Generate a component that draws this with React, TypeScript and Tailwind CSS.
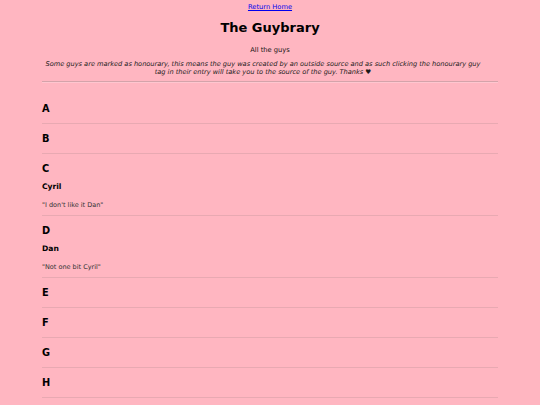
const sections: { letter: string; guys: { name: string; quote: string }[] }[] = [
  { letter: 'A', guys: [] },
  { letter: 'B', guys: [] },
  { letter: 'C', guys: [{ name: 'Cyril', quote: '"I don\'t like it Dan"' }] },
  { letter: 'D', guys: [{ name: 'Dan', quote: '"Not one bit Cyril"' }] },
  { letter: 'E', guys: [] },
  { letter: 'F', guys: [] },
  { letter: 'G', guys: [] },
  { letter: 'H', guys: [] },
];

export default function App() {
  return (
    <div className="min-h-screen bg-[#ffb6c1] text-black font-['DejaVu_Sans',Verdana,sans-serif] overflow-hidden">
      <div className="mx-auto w-[456px] pt-[3px]">
        <div className="text-center text-[6.7px] leading-[8px]">
          <a href="#" className="text-[#0000ee] underline">Return Home</a>
        </div>
        <h1 className="mt-[9px] text-center text-[13px] leading-[16px] font-bold">The Guybrary</h1>
        <p className="mt-[10px] text-center text-[6.7px] leading-[8px] text-[#111]">All the guys</p>
        <p className="mt-[6px] pr-[14px] text-center text-[6.6px] leading-[8.3px] italic text-[#1a1a1a]">
          Some guys are marked as honourary, this means the guy was created by an outside source and as such clicking the honourary guy tag in their entry will take you to the source of the guy. Thanks ♥
        </p>
        <div className="mt-[4px] border-t border-t-[#d4a3aa] border-b border-b-[#ffc6cf]" />
        <div className="mt-[11px]">
          {sections.map((s) => (
            <div key={s.letter} className="border-b border-[#e8a9b2] pt-[9px] pb-[8px]">
              <h2 className="text-[9.8px] leading-[12px] font-bold">{s.letter}</h2>
              {s.guys.map((g) => (
                <div key={g.name} className="mb-[-2px]">
                  <h3 className="mt-[7px] text-[7.6px] leading-[10px] font-bold">{g.name}</h3>
                  <p className="mt-[9px] text-[6.5px] leading-[8px] text-[#333]">{g.quote}</p>
                </div>
              ))}
            </div>
          ))}
        </div>
      </div>
    </div>
  );
}
